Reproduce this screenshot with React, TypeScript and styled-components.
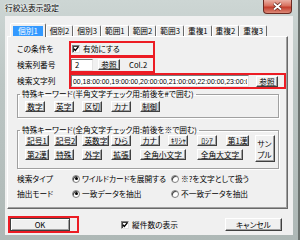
import React from "react";
import styled, { createGlobalStyle } from "styled-components";

const GlobalStyle = createGlobalStyle`
  html, body {
    margin: 0;
    padding: 0;
  }
  body {
    font-family: "Noto Sans CJK JP", "Noto Sans", sans-serif;
    font-size: 7.7px;
    line-height: 10px;
    color: #000;
    font-feature-settings: "palt";
  }
  * {
    box-sizing: border-box;
  }
`;

const Window = styled("div")`
  width: 300px;
  height: 240px;
  display: flex;
  flex-direction: column;
  padding: 0 5px 5px 5px;
  border-right: 2px solid #6b726f;
  background: linear-gradient(180deg, #cdd6d4 0%, #bcc6c4 35%, #aeb8b6 100%);
`;

const TitleBar = styled("div")`
  height: 16px;
  display: flex;
  align-items: flex-start;
  justify-content: space-between;
  flex: none;
`;

const Title = styled("span")`
  margin-top: 3px;
  text-shadow: 0 0 3px #fff, 0 0 2px #fff;
`;

const CloseButton = styled("div")`
  width: 29px;
  height: 14px;
  margin-right: 1px;
  border: 1px solid #6a2a22;
  border-top: none;
  border-radius: 0 0 4px 4px;
  background: linear-gradient(180deg, #eab0a4 0%, #d8705e 45%, #c33d2c 55%, #dc8a78 100%);
  display: flex;
  align-items: center;
  justify-content: center;
`;

const Client = styled("div")`
  flex: 1;
  display: flex;
  flex-direction: column;
  padding: 7px 5px 0 2px;
  background: #f0f0f0;
`;

const TabStrip = styled("div")`
  height: 13px;
  display: flex;
  align-items: flex-end;
  padding-left: 3px;
  position: relative;
  z-index: 1;
  flex: none;
`;

const Tab = styled("div")<{ $active?: boolean }>`
  height: ${(p) => (p.$active ? 14 : 11)}px;
  margin-bottom: ${(p) => (p.$active ? -1 : 0)}px;
  padding: 0 ${(p) => (p.$active ? 2 : 3)}px;
  display: flex;
  align-items: center;
  background: #f0f0f0;
  border: 1px solid;
  border-bottom: none;
  border-color: #fff #696969 transparent #fff;
  border-radius: 2px 2px 0 0;
  white-space: nowrap;
`;

const TabText = styled("span")<{ $active?: boolean }>`
  padding: 0 ${(p) => (p.$active ? 5 : 0)}px;
  background: ${(p) => (p.$active ? "#3399ff" : "transparent")};
  color: ${(p) => (p.$active ? "#fff" : "#000")};
`;

const Panel = styled("div")`
  width: 281px;
  height: 173px;
  flex: none;
  display: flex;
  flex-direction: column;
  padding: 4px 0 0 9px;
  background: #f0f0f0;
  border: 1px solid;
  border-color: #fff #696969 #696969 #fff;
  box-shadow: inset -1px -1px #a0a0a0;
`;

const Row = styled("div")<{ $pull?: number }>`
  display: flex;
  align-items: center;
  margin-top: ${(p) => -(p.$pull || 0)}px;
`;

const Label = styled("span")<{ $w?: number }>`
  width: ${(p) => p.$w || 52}px;
  flex: none;
  white-space: nowrap;
`;

const Highlight = styled("div")<{ $w: number; $h: number; $gap?: number; $pl?: number }>`
  width: ${(p) => p.$w}px;
  height: ${(p) => p.$h}px;
  display: flex;
  align-items: center;
  gap: ${(p) => p.$gap || 0}px;
  padding-left: ${(p) => p.$pl || 0}px;
  border: 2px solid #ec1c24;
  white-space: nowrap;
`;

const CheckBox = styled("span")`
  width: 8px;
  height: 8px;
  flex: none;
  display: inline-flex;
  align-items: center;
  justify-content: center;
  background: #fff;
  border: 1px solid;
  border-color: #808080 #e0e0e0 #e0e0e0 #808080;
  box-shadow: inset 1px 1px #404040;
`;

const CheckLabel = styled("label")<{ $ml?: number }>`
  display: flex;
  align-items: center;
  gap: 3px;
  margin-left: ${(p) => p.$ml || 0}px;
  white-space: nowrap;
`;

const TextBox = styled("input")<{ $w: number; $h: number; $mono?: boolean }>`
  width: ${(p) => p.$w}px;
  height: ${(p) => p.$h}px;
  flex: none;
  margin: 0;
  padding: 0 1px 0 3px;
  background: #fff;
  border: 1px solid;
  border-color: #7a7a7a #e3e3e3 #e3e3e3 #7a7a7a;
  outline: none;
  color: #000;
  font-family: ${(p) => (p.$mono ? '"Liberation Sans", sans-serif' : "inherit")};
  font-size: ${(p) => (p.$mono ? 6.9 : 7.7)}px;
  padding-left: ${(p) => (p.$mono ? 1 : 3)}px;
`;

const Button = styled("button")<{ $w?: number; $h?: number; $default?: boolean }>`
  width: ${(p) => (p.$w ? `${p.$w}px` : "auto")};
  min-width: 20px;
  height: ${(p) => p.$h || 11}px;
  margin: 0;
  padding: 0 1px;
  display: inline-flex;
  align-items: center;
  justify-content: center;
  flex: none;
  font: inherit;
  font-feature-settings: "palt";
  line-height: 9px;
  color: #000;
  white-space: nowrap;
  background: #f0f0f0;
  border: 1px solid;
  border-color: ${(p) => (p.$default ? "#404040" : "#fff #404040 #404040 #fff")};
  box-shadow: ${(p) =>
    p.$default
      ? "inset 1px 1px #fff, inset -1px -1px #a0a0a0"
      : "inset -1px -1px #a0a0a0"};
`;

const Group = styled("fieldset")<{ $pt: number; $pb: number; $mt?: number }>`
  width: 262px;
  margin: ${(p) => p.$mt || 0}px 0 0 0;
  padding: ${(p) => p.$pt}px 0 ${(p) => p.$pb}px 7px;
  border: 1px solid #a0a0a0;
  box-shadow: inset 1px 1px #fff, 1px 1px #fff;
  min-width: 0;
`;

const Legend = styled("legend")`
  margin-left: -5px;
  padding: 0 2px;
  line-height: 10px;
  white-space: nowrap;
`;

const KeyGrid = styled("div")`
  display: grid;
  grid-template-columns: repeat(8, 22px) 20px;
  grid-auto-rows: 11px;
  column-gap: 6.7px;
  row-gap: 3px;
  justify-items: start;
`;

const SampleButton = styled(Button)`
  grid-column: 9;
  grid-row: 1 / span 2;
  height: 27px;
  width: 20px;
  margin-bottom: -2px;
  flex-direction: column;
  gap: 2px;
`;

const SampleLine = styled("span")`
  display: block;
  line-height: 9px;
  height: 9px;
  overflow: hidden;
`;

const Radio = styled("span")<{ $on?: boolean }>`
  width: 8px;
  height: 8px;
  flex: none;
  border-radius: 50%;
  background: #fff;
  border: 1px solid #808080;
  box-shadow: inset 1px 1px #404040;
  display: inline-flex;
  align-items: center;
  justify-content: center;
  &::after {
    content: "";
    width: 3px;
    height: 3px;
    border-radius: 50%;
    background: ${(p) => (p.$on ? "#000" : "transparent")};
  }
`;

const RadioOption = styled("label")<{ $w?: number }>`
  width: ${(p) => (p.$w ? `${p.$w}px` : "auto")};
  display: flex;
  align-items: center;
  gap: 2px;
  white-space: nowrap;
  overflow: hidden;
`;

const OptionRow = styled("div")<{ $mt?: number }>`
  height: 15px;
  display: flex;
  align-items: center;
  margin-top: ${(p) => p.$mt || 0}px;
`;

const Footer = styled("div")`
  flex: 1;
  display: flex;
  align-items: flex-start;
  padding: 7px 6px 0 1px;
`;

const FooterCheck = styled(CheckLabel)`
  margin-top: 4px;
`;

const CancelButton = styled(Button)`
  margin-left: auto;
  margin-top: 2px;
`;

const Check = () => (
  <svg width="6" height="6" viewBox="0 0 6 6">
    <path d="M0.8 2.8 L2.3 4.4 L5.3 0.9" fill="none" stroke="#000" strokeWidth="1.4" />
  </svg>
);

const tabs = ["個別1", "個別2", "個別3", "範囲1", "範囲2", "範囲3", "重複1", "重複2", "重複3"];
const halfKeys = ["数字", "英字", "区切", "カナ", "制御"];
const fullKeys1 = ["記号1", "記号2", "英数字", "ひら", "カナ", "ｷﾘｼｬ", "ﾛｼｱ", "第1漢"];
const fullKeys2 = ["第2漢", "特殊", "外字", "拡張"];

const searchText = "00,18:00:00,19:00:00,20:00:00,21:00:00,22:00:00,23:00:00";

export default function App() {
  return (
    <>
      <GlobalStyle />
      <Window>
        <TitleBar>
          <Title>行絞込表示設定</Title>
          <CloseButton>
            <svg width="11" height="9" viewBox="0 0 11 9">
              <path d="M2 1.5 L9 7.5 M9 1.5 L2 7.5" stroke="#5a2018" strokeWidth="3.2" />
              <path d="M2 1.5 L9 7.5 M9 1.5 L2 7.5" stroke="#fff" strokeWidth="1.8" />
            </svg>
          </CloseButton>
        </TitleBar>
        <Client>
          <TabStrip>
            {tabs.map((t, i) => (
              <Tab key={t} $active={i === 0}>
                <TabText $active={i === 0}>{t}</TabText>
              </Tab>
            ))}
          </TabStrip>
          <Panel>
            <Row>
              <Label>この条件を</Label>
              <Highlight $w={86} $h={16} $pl={1}>
                <CheckLabel>
                  <CheckBox>
                    <Check />
                  </CheckBox>
                  有効にする
                </CheckLabel>
              </Highlight>
            </Row>
            <Row $pull={1}>
              <Label>検索列番号</Label>
              <Highlight $w={86} $h={17}>
                <TextBox $w={22} $h={12} defaultValue="2" readOnly />
                <Button $w={22} style={{ marginLeft: 5 }}>参照</Button>
                <span style={{ marginLeft: 9 }}>Col.2</span>
              </Highlight>
            </Row>
            <Row>
              <Label>検索文字列</Label>
              <Highlight $w={217} $h={16} $gap={7}>
                <TextBox $w={178} $h={12} $mono defaultValue={searchText} readOnly />
                <Button $w={22}>参照</Button>
              </Highlight>
            </Row>
            <Group $pt={2} $pb={5}>
              <Legend>特殊キーワード(半角文字チェック用:前後を#で囲む)</Legend>
              <KeyGrid>
                {halfKeys.map((k) => (
                  <Button key={k}>{k}</Button>
                ))}
              </KeyGrid>
            </Group>
            <Group $pt={0} $pb={8} $mt={7}>
              <Legend>特殊キーワード(全角文字チェック用:前後を※で囲む)</Legend>
              <KeyGrid>
                {fullKeys1.map((k) => (
                  <Button key={k}>{k}</Button>
                ))}
                <SampleButton>
                  <SampleLine>サン</SampleLine>
                  <SampleLine>プル</SampleLine>
                </SampleButton>
                {fullKeys2.map((k) => (
                  <Button key={k}>{k}</Button>
                ))}
                <Button style={{ gridColumn: "5 / span 2" }}>&nbsp;全角小文字&nbsp;</Button>
                <Button style={{ gridColumn: "7 / span 2" }}>&nbsp;全角大文字&nbsp;</Button>
              </KeyGrid>
            </Group>
            <OptionRow $mt={2}>
              <Label $w={55}>検索タイプ</Label>
              <RadioOption $w={99}>
                <Radio $on />
                ワイルドカードを展開する
              </RadioOption>
              <RadioOption>
                <Radio />
                ※?を文字として扱う
              </RadioOption>
            </OptionRow>
            <OptionRow>
              <Label $w={55}>抽出モード</Label>
              <RadioOption $w={99}>
                <Radio $on />
                一致データを抽出
              </RadioOption>
              <RadioOption>
                <Radio />
                不一致データを抽出
              </RadioOption>
            </OptionRow>
          </Panel>
          <Footer>
            <Highlight $w={71} $h={17} $pl={0}>
              <Button $w={60} $h={13} $default>OK</Button>
            </Highlight>
            <FooterCheck $ml={42}>
              <CheckBox>
                <Check />
              </CheckBox>
              縦件数の表示
            </FooterCheck>
            <CancelButton $w={57} $h={13}>キャンセル</CancelButton>
          </Footer>
        </Client>
      </Window>
    </>
  );
}
